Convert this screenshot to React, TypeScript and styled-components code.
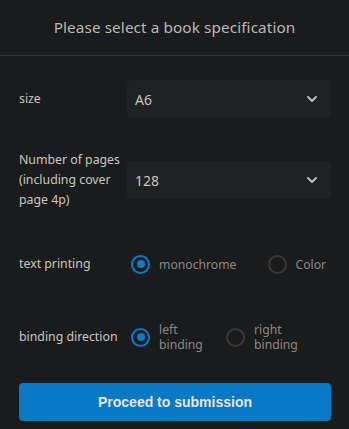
import React from "react";
import styled, { createGlobalStyle } from "styled-components";

const Global = createGlobalStyle`
  html, body { margin: 0; padding: 0; background: #1a1b1d; }
  body { font-family: "Noto Sans", "DejaVu Sans", sans-serif; }
  * { box-sizing: border-box; }
`;

const Page = styled.div`
  width: 349px;
  height: 429px;
  background: #1a1b1d;
  display: flex;
  flex-direction: column;
`;

const Header = styled.div`
  height: 56px;
  border-bottom: 1px solid #353638;
  display: flex;
  align-items: center;
  justify-content: center;
  padding-bottom: 2px;
`;

const Title = styled.h1`
  margin: 0;
  font-size: 15.3px;
  font-weight: 400;
  color: #bdb8b0;
  letter-spacing: 0.1px;
`;

const Form = styled.div`
  display: flex;
  flex-direction: column;
  padding: 24px 18px 0 19px;
`;

const Row = styled.div<{ $h: number; $mt: number }>`
  display: flex;
  align-items: center;
  height: ${(p) => p.$h}px;
  margin-top: ${(p) => p.$mt}px;
`;

const Label = styled.div`
  width: 108px;
  flex: none;
  font-size: 12.3px;
  line-height: 20px;
  color: #cbc6be;
`;

const Select = styled.div`
  flex: 1;
  height: 38px;
  background: #202124;
  border-radius: 4px;
  display: flex;
  align-items: center;
  justify-content: space-between;
  padding: 0 14px 0 8px;
  font-size: 14px;
  color: #c9c4bc;
`;

const Options = styled.div`
  display: flex;
  align-items: center;
  padding-left: 4px;
`;

const Option = styled.label<{ $mr: number }>`
  display: flex;
  align-items: center;
  margin-right: ${(p) => p.$mr}px;
  cursor: pointer;
`;

const Circle = styled.span<{ $on: boolean }>`
  width: 19px;
  height: 19px;
  border-radius: 50%;
  border: 2px solid ${(p) => (p.$on ? "#0b7bc6" : "#3a3936")};
  display: flex;
  align-items: center;
  justify-content: center;
  flex: none;
  &::after {
    content: "";
    display: ${(p) => (p.$on ? "block" : "none")};
    width: 8px;
    height: 8px;
    border-radius: 50%;
    background: #0b7bc6;
  }
`;

const OptText = styled.span<{ $w?: number }>`
  margin-left: 9px;
  font-size: 12.2px;
  line-height: 15px;
  color: #8c8782;
  ${(p) => (p.$w ? `width: ${p.$w}px;` : "")}
`;

const Button = styled.button`
  margin-top: 26px;
  height: 38px;
  width: 100%;
  border: none;
  border-radius: 4px;
  background: #0879c4;
  color: #e6e6e6;
  font-family: "Liberation Sans", Arial, sans-serif;
  font-weight: 700;
  font-size: 14px;
`;

const Chevron = () => (
  <svg width="10" height="6" viewBox="0 0 10 6">
    <polyline
      points="1,1 5,5 9,1"
      fill="none"
      stroke="#c4bfb6"
      strokeWidth="1.8"
      strokeLinecap="round"
      strokeLinejoin="round"
    />
  </svg>
);

export default function App() {
  return (
    <Page>
      <Global />
      <Header>
        <Title>Please select a book specification</Title>
      </Header>
      <Form>
        <Row $h={38} $mt={0}>
          <Label>size</Label>
          <Select>
            <span>A6</span>
            <Chevron />
          </Select>
        </Row>
        <Row $h={60} $mt={32}>
          <Label>
            Number of pages
            <br />
            (including cover page 4p)
          </Label>
          <Select>
            <span>128</span>
            <Chevron />
          </Select>
        </Row>
        <Row $h={40} $mt={34}>
          <Label>text printing</Label>
          <Options>
            <Option $mr={31}>
              <Circle $on={true} />
              <OptText>monochrome</OptText>
            </Option>
            <Option $mr={0}>
              <Circle $on={false} />
              <OptText>Color</OptText>
            </Option>
          </Options>
        </Row>
        <Row $h={40} $mt={33}>
          <Label>binding direction</Label>
          <Options>
            <Option $mr={24}>
              <Circle $on={true} />
              <OptText $w={43}>left binding</OptText>
            </Option>
            <Option $mr={0}>
              <Circle $on={false} />
              <OptText $w={50}>right binding</OptText>
            </Option>
          </Options>
        </Row>
        <Button>Proceed to submission</Button>
      </Form>
    </Page>
  );
}
